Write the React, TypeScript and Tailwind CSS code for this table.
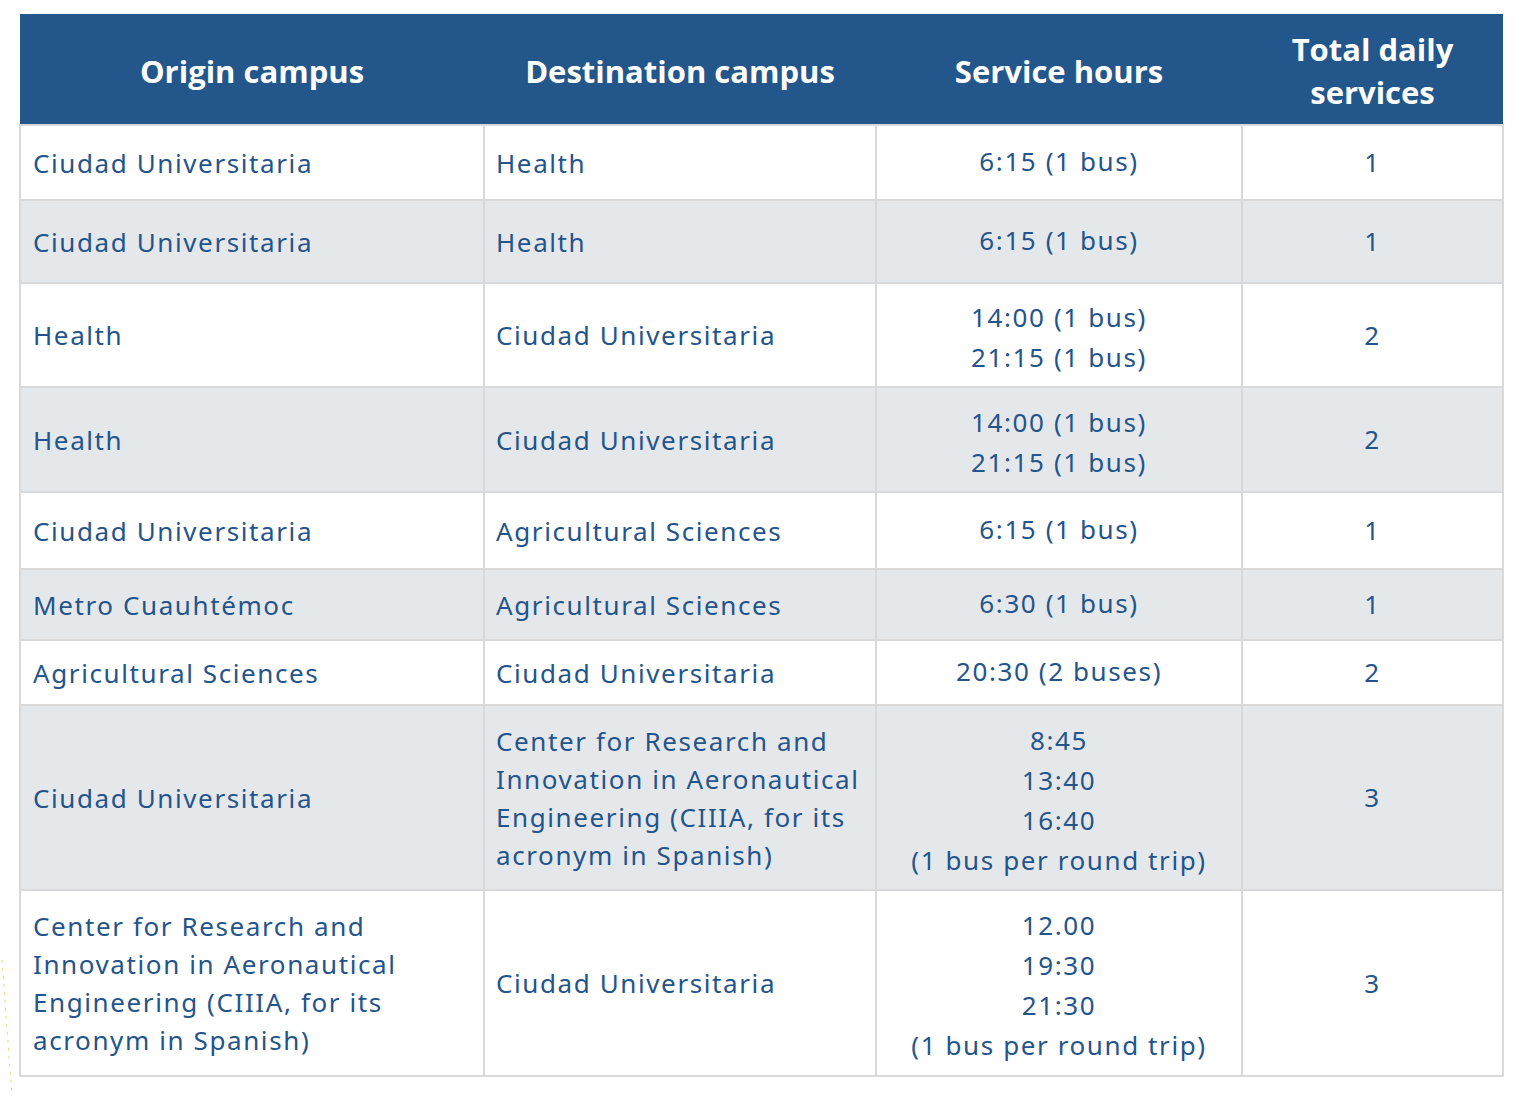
const rows = [
  { origin: ['Ciudad Universitaria'], dest: ['Health'], hours: ['6:15 (1 bus)'], total: '1', h: 'h-[75px]', alt: false },
  { origin: ['Ciudad Universitaria'], dest: ['Health'], hours: ['6:15 (1 bus)'], total: '1', h: 'h-[83px]', alt: true },
  { origin: ['Health'], dest: ['Ciudad Universitaria'], hours: ['14:00 (1 bus)', '21:15 (1 bus)'], total: '2', h: 'h-[104px]', alt: false },
  { origin: ['Health'], dest: ['Ciudad Universitaria'], hours: ['14:00 (1 bus)', '21:15 (1 bus)'], total: '2', h: 'h-[105px]', alt: true },
  { origin: ['Ciudad Universitaria'], dest: ['Agricultural Sciences'], hours: ['6:15 (1 bus)'], total: '1', h: 'h-[77px]', alt: false },
  { origin: ['Metro Cuauhtémoc'], dest: ['Agricultural Sciences'], hours: ['6:30 (1 bus)'], total: '1', h: 'h-[71px]', alt: true },
  { origin: ['Agricultural Sciences'], dest: ['Ciudad Universitaria'], hours: ['20:30 (2 buses)'], total: '2', h: 'h-[65px]', alt: false },
  {
    origin: ['Ciudad Universitaria'],
    dest: ['Center for Research and', 'Innovation in Aeronautical', 'Engineering (CIIIA, for its', 'acronym in Spanish)'],
    hours: ['8:45', '13:40', '16:40', '(1 bus per round trip)'],
    total: '3',
    h: 'h-[185px]',
    alt: true,
  },
  {
    origin: ['Center for Research and', 'Innovation in Aeronautical', 'Engineering (CIIIA, for its', 'acronym in Spanish)'],
    dest: ['Ciudad Universitaria'],
    hours: ['12.00', '19:30', '21:30', '(1 bus per round trip)'],
    total: '3',
    h: 'h-[186px]',
    alt: false,
  },
]

const bodyFont = "font-['Noto_Sans',sans-serif] text-[26px] tracking-[1.6px] text-[#24548c]"

export default function App() {
  return (
    <div className="relative min-h-[1096px] w-[1526px] bg-white pt-[14px] pl-[19px]">
      {/* faint dotted guide on the left edge */}
      <svg className="absolute left-0 top-[960px] pointer-events-none" width="20" height="136">
        <line x1="2" y1="0" x2="12" y2="136" stroke="#f3d77a" strokeWidth="1" strokeDasharray="3 5" />
      </svg>

      <table className="w-[1483px] table-fixed border-collapse">
        <colgroup>
          <col className="w-[464px]" />
          <col className="w-[392px]" />
          <col className="w-[366px]" />
          <col className="w-[261px]" />
        </colgroup>
        <thead>
          <tr className="h-[111px] bg-[#23568b] font-['Open_Sans',sans-serif] text-[31px] font-bold leading-[43px] text-white">
            <th className="px-3 pt-1 text-center">Origin campus</th>
            <th className="px-3 pt-1 text-center">Destination campus</th>
            <th className="px-3 pt-1 text-center">Service hours</th>
            <th className="px-8 pt-1 text-center">Total daily services</th>
          </tr>
        </thead>
        <tbody className={bodyFont}>
          {rows.map((r, i) => (
            <tr key={i} className={`${r.h} ${r.alt ? 'bg-[#e5e8eb]' : 'bg-white'}`}>
              <td className="border-2 border-[#d9d9d9] pl-[12px] pr-1 align-middle leading-[38px]">
                {r.origin.map((l) => (
                  <div key={l} className="whitespace-nowrap">{l}</div>
                ))}
              </td>
              <td className="border-2 border-[#d9d9d9] pl-[11px] pr-1 align-middle leading-[38px]">
                {r.dest.map((l) => (
                  <div key={l} className="whitespace-nowrap">{l}</div>
                ))}
              </td>
              <td
                className={`border-2 border-[#d9d9d9] px-1 text-center align-middle leading-[40px] ${
                  r.hours.length > 1 ? 'pt-1' : 'pb-1'
                }`}
              >
                {r.hours.map((l) => (
                  <div key={l} className="whitespace-nowrap">{l}</div>
                ))}
              </td>
              <td className="border-2 border-[#d9d9d9] text-center align-middle">{r.total}</td>
            </tr>
          ))}
        </tbody>
      </table>
    </div>
  )
}
